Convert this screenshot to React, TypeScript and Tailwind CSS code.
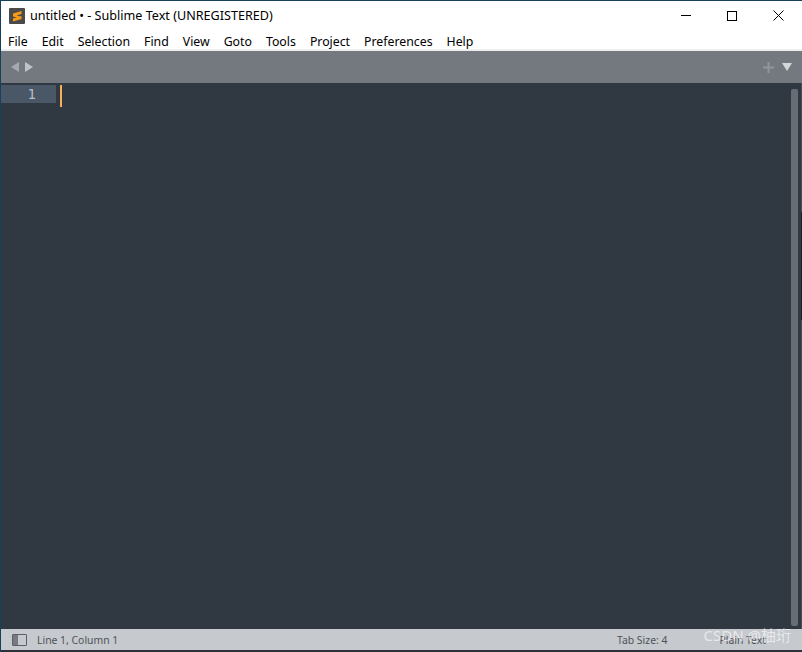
const menus = ["File", "Edit", "Selection", "Find", "View", "Goto", "Tools", "Project", "Preferences", "Help"];

export default function App() {
  return (
    <div className="relative flex h-[652px] w-[802px] flex-col overflow-hidden border-t border-l border-[#16405c] bg-white font-['Noto_Sans','Liberation_Sans',sans-serif] text-black">
      {/* Title bar */}
      <div className="flex h-[29px] shrink-0 items-center pl-[8px]">
        <svg width="16" height="16" viewBox="0 0 16 16" className="shrink-0">
          <rect width="16" height="16" rx="1" fill="#4a4a4a" />
          <path d="M4 5.500 12.500 3v3L4 8.500zM4 6.500l8.500 2.200v2L4 8.500zM4 10.500 12.500 8v3L4 13.500z" fill="#f59b14" />
        </svg>
        <span className="ml-[5px] whitespace-nowrap pt-[2px] text-[12.6px] leading-none">untitled • - Sublime Text (UNREGISTERED)</span>
        <div className="ml-auto mr-[1px] flex items-center">
          <div className="flex w-[46px] justify-center">
            <div className="h-px w-[10px] bg-black" />
          </div>
          <div className="flex w-[46px] justify-center">
            <div className="h-[10px] w-[10px] border border-black" />
          </div>
          <div className="flex w-[46px] justify-center">
            <svg width="11" height="11" viewBox="0 0 11 11">
              <path d="M.5.5l10 10M10.5.5l-10 10" stroke="#000" strokeWidth="1" fill="none" />
            </svg>
          </div>
        </div>
      </div>

      {/* Menu bar */}
      <div className="flex h-[19px] shrink-0 items-center gap-[14px] pl-[7px] pt-[5px] text-[12.3px]">
        {menus.map((m) => (
          <span key={m} className="leading-none">{m}</span>
        ))}
      </div>

      {/* Tab strip */}
      <div className="h-[34px] shrink-0 border-t-2 border-[#eeeeee] bg-[#74787f]">
        <div className="flex h-full items-center pl-[10px] pr-[10px]">
          <svg width="22" height="10" viewBox="0 0 22 10">
            <path d="M8 0v10L0 5z" fill="#a6a9ae" />
            <path d="M14 0v10l8-5z" fill="#c0c3c7" />
          </svg>
          <svg width="11" height="11" viewBox="0 0 11 11" className="ml-auto">
            <path d="M4.500 0h2v4.500H11v2H6.500V11h-2V6.500H0v-2h4.500z" fill="#92959a" />
          </svg>
          <svg width="10" height="8" viewBox="0 0 10 8" className="ml-[8px]">
            <path d="M0 0h10L5 8z" fill="#d4d6d8" />
          </svg>
        </div>
      </div>

      {/* Editor */}
      <div className="flex min-h-0 flex-1 border-r border-[#464e57] bg-[#303841] pt-[2px]">
        <div className="flex h-[18px] w-[55px] shrink-0 items-center justify-end bg-[#4a5766] pr-[20px] font-['DejaVu_Sans_Mono',monospace] text-[14px] text-[#b4bcc6]">
          1
        </div>
        <div className="ml-[4px] h-[22px] w-[2px] shrink-0 bg-[#f9ae58]" />
        <div className="ml-auto flex pr-[3px]">
          <div className="mb-[3px] mt-[4px] w-[7px] rounded-[2px] bg-[#666d75]" />
        </div>
      </div>

      {/* Status bar */}
      <div className="flex h-[21px] shrink-0 items-center bg-[#c6c9ce] pl-[11px] text-[10.4px] text-[#4f5358]">
        <div className="flex h-[12px] w-[15px] overflow-hidden rounded-[1px] border border-[#5c6066]">
          <div className="w-[5px] bg-[#777b81]" />
        </div>
        <span className="ml-[10px] pt-[1px] leading-none">Line 1, Column 1</span>
        <span className="ml-auto pt-[1px] leading-none">Tab Size: 4</span>
        <span className="ml-[52px] mr-[36px] pt-[1px] leading-none">Plain Text</span>
      </div>
      <div className="h-[2px] shrink-0 bg-[#2e3238]" />

      {/* Sliver of the window behind, on the right edge */}
      <div className="absolute right-0 top-[211px] h-[108px] w-px bg-[#1c2227]" />

      {/* Watermark */}
      <span className="absolute right-[11px] top-[624px] whitespace-nowrap font-['Noto_Sans','Noto_Sans_CJK_SC',sans-serif] text-[15px] leading-[20px] text-white/60">
        CSDN @柚珩
      </span>
    </div>
  );
}
